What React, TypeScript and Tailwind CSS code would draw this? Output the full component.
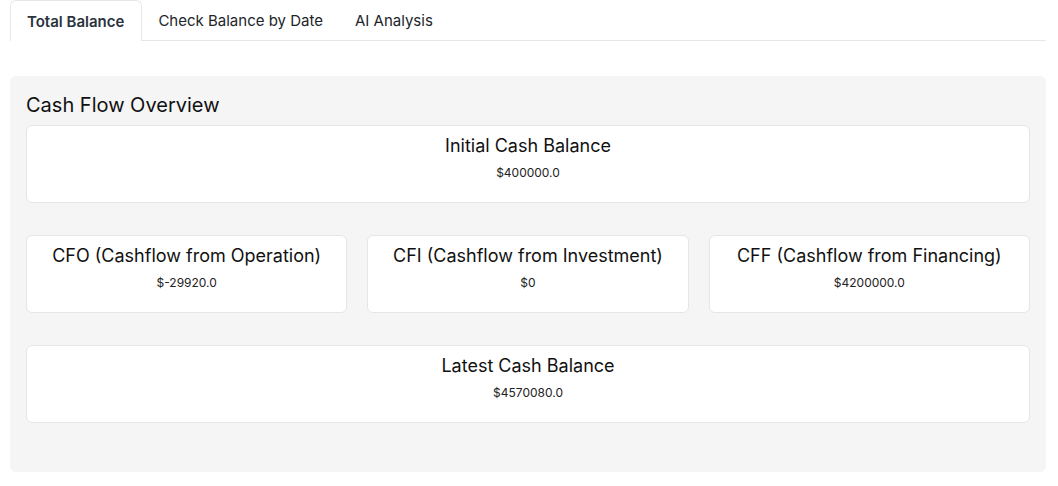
import { ReactNode } from "react";

function MetricCard({ title, value }: { title: string; value: string }) {
  return (
    <div className="h-[78px] rounded-md border border-[#e6e6e6] bg-white pt-[8px] text-center">
      <div className="text-[18px] leading-[24px] text-[#111]">{title}</div>
      <div className="mt-[7px] text-[12px] leading-[16px] text-[#222]">{value}</div>
    </div>
  );
}

function Tab({ label, active }: { label: string; active?: boolean }) {
  return (
    <div
      className={
        active
          ? "-mb-px h-[41px] rounded-t-md border border-b-0 border-[#e5e7eb] bg-white pl-4 pr-[17px] pt-[10px] text-[15px] font-semibold text-[#2b333d]"
          : "h-10 px-4 pt-[10px] text-[15px] text-[#212529]"
      }
    >
      {label}
    </div>
  );
}

function Row({ children }: { children: ReactNode }) {
  return <div className="grid grid-cols-3 gap-5">{children}</div>;
}

export default function App() {
  return (
    <div className="min-h-screen bg-white px-[10px] font-['Inter',sans-serif] text-[#111]">
      <div className="flex w-[1036px] border-b border-[#e5e7eb]">
        <Tab label="Total Balance" active />
        <Tab label="Check Balance by Date" />
        <Tab label="AI Analysis" />
      </div>

      <div className="mt-[35px] h-[396px] w-[1036px] rounded-md bg-[#f5f5f5] px-4 pt-[15px]">
        <h2 className="text-[20px] leading-[28px] text-[#111]">Cash Flow Overview</h2>
        <div className="mt-[6px]">
          <MetricCard title="Initial Cash Balance" value="$400000.0" />
        </div>
        <div className="mt-8">
          <Row>
            <MetricCard title="CFO (Cashflow from Operation)" value="$-29920.0" />
            <MetricCard title="CFI (Cashflow from Investment)" value="$0" />
            <MetricCard title="CFF (Cashflow from Financing)" value="$4200000.0" />
          </Row>
        </div>
        <div className="mt-8">
          <MetricCard title="Latest Cash Balance" value="$4570080.0" />
        </div>
      </div>
    </div>
  );
}
